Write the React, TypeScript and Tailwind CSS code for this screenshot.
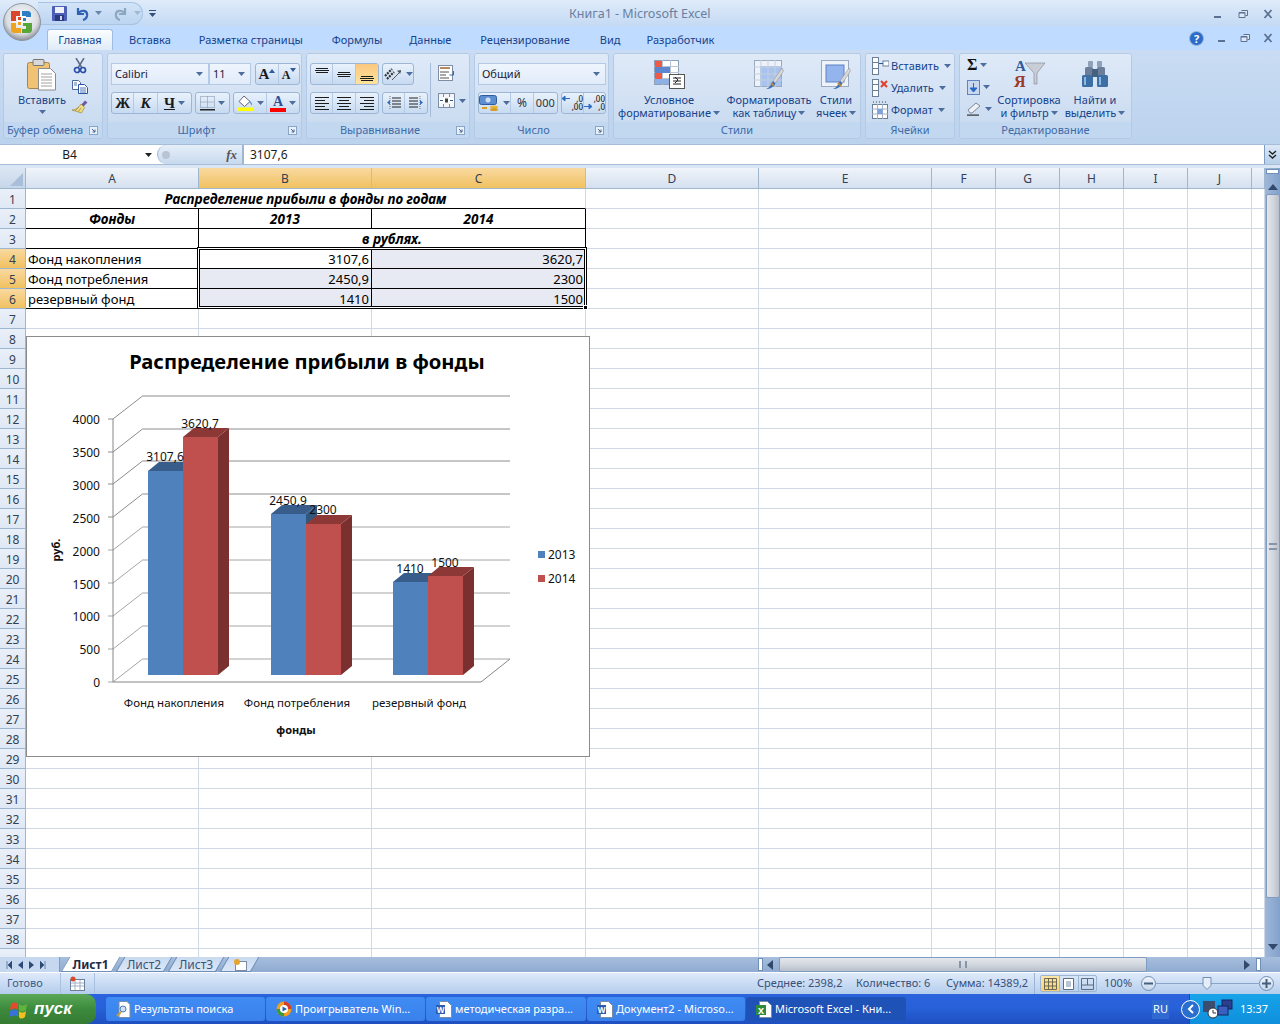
import type { ReactNode } from "react";

function Caret({ c = "#4d6d9c" }: { c?: string }) {
  return (
    <svg width="7" height="4" viewBox="0 0 7 4" className="shrink-0">
      <path d="M0 0h7L3.5 4z" fill={c} />
    </svg>
  );
}

function Lines({ kind }: { kind: "l" | "c" | "r" }) {
  const w = [14, 10, 14, 10, 14];
  return (
    <svg width="14" height="13" viewBox="0 0 14 13">
      {w.map((v, i) => {
        const x = kind === "l" ? 0 : kind === "r" ? 14 - v : (14 - v) / 2;
        return <rect key={i} x={x} y={i * 3} width={v} height="1" fill="#1c1c1c" />;
      })}
    </svg>
  );
}

function VAlign({ pos }: { pos: number }) {
  return (
    <svg width="14" height="14" viewBox="0 0 14 14">
      {[0, 2, 4].map((d, i) => (
        <rect key={i} x={i === 1 ? 0 : 1} y={pos + d} width={i === 1 ? 14 : 12} height="1" fill="#1c1c1c" />
      ))}
    </svg>
  );
}

function Launcher() {
  return (
    <svg width="9" height="9" viewBox="0 0 9 9" className="absolute right-[4px] bottom-[3px]">
      <rect x="0.5" y="0.5" width="8" height="8" fill="#e8f0fa" stroke="#8aa5c8" />
      <path d="M3 3l3 3M6 3.5V6H3.5" stroke="#44648f" fill="none" />
    </svg>
  );
}

function Group({ label, w, launcher, children }: { label: string; w: string; launcher?: boolean; children: ReactNode }) {
  return (
    <div className={`${w} relative flex h-[86px] shrink-0 flex-col overflow-hidden rounded-[3px] border border-[#b4cae4]`}>
      <div className="h-[68px] bg-gradient-to-b from-[#dfeaf8] to-[#cbdcf1]">{children}</div>
      <div className={`flex h-[16px] items-center justify-center bg-[#c1d8f0] text-[11px] text-[#3e6aa8] ${launcher ? "pr-[16px]" : ""}`}>{label}</div>
      {launcher && <Launcher />}
    </div>
  );
}

function ToolBox({ w, children }: { w: string; children: ReactNode }) {
  return (
    <div className={`${w} flex h-[22px] items-stretch overflow-hidden rounded-[3px] border border-[#9db6d4] bg-gradient-to-b from-[#e9f2fc] to-[#c7daf1]`}>
      {children}
    </div>
  );
}

function Seg({ w, on, children }: { w: string; on?: boolean; children: ReactNode }) {
  return (
    <div
      className={`${w} flex items-center justify-center gap-[3px] border-r border-[#b4c9e3] last:border-r-0 ${
        on ? "bg-gradient-to-b from-[#fbc77f] to-[#ffe39b]" : ""
      }`}
    >
      {children}
    </div>
  );
}

function Combo({ w, text }: { w: string; text: string }) {
  return (
    <div className={`${w} flex h-[22px] items-center justify-between border border-[#b4cae4] bg-gradient-to-b from-[#eef5fd] to-[#e1ecfa] pr-[5px] pl-[3px] text-[11px] text-[#1b1b3a]`}>
      <span>{text}</span>
      <Caret />
    </div>
  );
}

function Clipboard() {
  return (
    <svg width="30" height="32" viewBox="0 0 30 32">
      <rect x="0.5" y="3.5" width="22" height="26" rx="2" fill="#f0c274" stroke="#a6824c" />
      <rect x="6" y="0.5" width="11" height="6" rx="1" fill="#d8d8d8" stroke="#777" />
      <path d="M11.5 9.5h12l5 5v16.5h-17z" fill="#fff" stroke="#8b8b8b" />
      <path d="M14 15h11M14 18h11M14 21h11M14 24h11M14 27h11" stroke="#a0a0a0" />
    </svg>
  );
}

function Scissors() {
  return (
    <svg width="14" height="16" viewBox="0 0 14 16">
      <path d="M3 0l6 10M11 0L5 10" stroke="#5a6a85" strokeWidth="1.5" fill="none" />
      <circle cx="4" cy="12" r="2.5" fill="none" stroke="#2a4fa8" strokeWidth="1.7" />
      <circle cx="10" cy="12" r="2.5" fill="none" stroke="#2a4fa8" strokeWidth="1.7" />
    </svg>
  );
}

function CopyIcon() {
  return (
    <svg width="16" height="14" viewBox="0 0 16 14">
      <path d="M0.5 0.5h6l2 2v7h-8z" fill="#fff" stroke="#4a6a9a" />
      <path d="M6.5 4.5h6l3 3v6h-9z" fill="#fff" stroke="#2d55a0" />
      <path d="M8 8h6M8 10h6M8 12h6M2 3h3M2 5h3" stroke="#4a79c0" />
    </svg>
  );
}

function Brush() {
  return (
    <svg width="17" height="15" viewBox="0 0 17 15">
      <path d="M10 5l4-4.5 2.5 2L12 7z" fill="#6d58a8" />
      <path d="M10 4l3.5 3.5-3 5.5L1 10c4 0 7-3 9-6z" fill="#efdc8a" stroke="#a08a3a" strokeWidth="0.7" />
      <path d="M4 11l4-4M7 12l3-4" stroke="#b09a45" />
    </svg>
  );
}

function Letter({ ch, bold, italic, under }: { ch: string; bold?: boolean; italic?: boolean; under?: boolean }) {
  return (
    <span
      className={`font-['Liberation_Serif',serif] text-[15px] leading-none text-[#1a1a1a] ${bold ? "font-bold" : ""} ${italic ? "italic" : ""} ${under ? "underline" : ""}`}
    >
      {ch}
    </span>
  );
}

function BigA({ size, up }: { size: string; up: boolean }) {
  return (
    <span className="relative flex items-end">
      <span className={`${size} font-['Liberation_Serif',serif] leading-none font-bold text-[#1a1a1a]`}>A</span>
      <svg width="6" height="4" viewBox="0 0 6 4" className="mb-[9px]">
        <path d={up ? "M0 4h6L3 0z" : "M0 0h6L3 4z"} fill="#2f5a9e" />
      </svg>
    </span>
  );
}

function BorderIcon() {
  return (
    <svg width="15" height="15" viewBox="0 0 15 15">
      <path d="M0.5 0.5h14v11h-14zM7.5 0.5v11M0.5 6h14" fill="none" stroke="#7d8da5" strokeDasharray="1 1" />
      <rect x="0" y="13" width="15" height="1.5" fill="#222" />
    </svg>
  );
}

function FillIcon() {
  return (
    <svg width="17" height="16" viewBox="0 0 17 16">
      <path d="M7 1l6 5.5-5.5 5L2 6.5z" fill="#fff" stroke="#667" />
      <path d="M13 6c2 2 2 3 1.5 4.5C14 9 13 8 13 6z" fill="#2a75c9" />
      <rect x="0" y="12.5" width="17" height="3.5" fill="#ffff00" />
    </svg>
  );
}

function OrientIcon() {
  return (
    <svg width="20" height="15" viewBox="0 0 20 15">
      <path d="M2 9l7-7M4 12l7-7" stroke="#333" strokeWidth="2.2" strokeDasharray="2 1" />
      <path d="M9 13l9-9" stroke="#555" />
      <path d="M18 3l-4 .8 3.2 3.2z" fill="#555" />
    </svg>
  );
}

function WrapIcon() {
  return (
    <svg width="17" height="16" viewBox="0 0 17 16">
      <rect x="0.5" y="0.5" width="14" height="15" fill="#fff" stroke="#7d8da5" />
      <path d="M2 3h10" stroke="#a0622a" strokeWidth="1.5" />
      <path d="M2 7h9M2 10h6M2 13h9" stroke="#555" />
      <path d="M15.5 6v4h-4" stroke="#3566b0" fill="none" />
    </svg>
  );
}

function MergeIcon() {
  return (
    <svg width="18" height="15" viewBox="0 0 18 15">
      <rect x="0.5" y="0.5" width="16" height="14" fill="#f2f5fa" stroke="#7d8da5" />
      <rect x="1" y="5" width="15" height="5" fill="#fff" />
      <path d="M5.5 1v3M11.5 1v3M5.5 11v3M11.5 11v3" stroke="#7d8da5" />
      <path d="M2 7.5h3M12 7.5h3" stroke="#2f5a9e" />
      <rect x="7" y="5.5" width="3" height="4" fill="#444" />
    </svg>
  );
}

function IndentIcon({ flip }: { flip?: boolean }) {
  return (
    <svg width="14" height="16" viewBox="0 0 14 16" className={flip ? "-scale-x-100" : ""}>
      <path d="M5 3h9M5 6h9M5 9h9M5 12h9" stroke="#222" />
      <path d="M3 1v14" stroke="#777" strokeDasharray="1 1" />
      <path d="M0 7.5l3-2.5v5z" fill="#2f6cc0" />
    </svg>
  );
}

function MoneyIcon() {
  return (
    <svg width="21" height="17" viewBox="0 0 21 17">
      <rect x="0.5" y="0.5" width="17" height="9" rx="2" fill="#5f8ed0" stroke="#2f5a9e" />
      <circle cx="9" cy="5" r="2.5" fill="#cfe0f5" />
      <ellipse cx="15" cy="12" rx="4" ry="1.6" fill="#e8b530" />
      <ellipse cx="15" cy="14.5" rx="4" ry="1.6" fill="#d99d20" />
      <path d="M3 13h5" stroke="#d99d20" strokeWidth="2" />
    </svg>
  );
}

function DecIcon({ top, bottom, left }: { top: string; bottom: string; left: boolean }) {
  return (
    <div className="grid h-[17px] w-[21px] grid-cols-[8px_13px] text-[8px] leading-[8px] font-medium text-[#222]">
      <svg width="8" height="7" viewBox="0 0 8 7" className={left ? "col-start-1 row-start-1" : "col-start-1 row-start-2"}>
        <path d="M8 3.5H3M3 1L0 3.5 3 6z" fill="#2f6cc0" stroke="#2f6cc0" transform={left ? "" : "rotate(180 4 3.5)"} />
      </svg>
      <span className="col-start-2 row-start-1 text-right">{top}</span>
      <span className="col-start-2 row-start-2 text-right">{bottom}</span>
    </div>
  );
}

function CondFormat() {
  return (
    <svg width="31" height="29" viewBox="0 0 31 29">
      <rect x="0.5" y="0.5" width="24" height="24" fill="#fff" stroke="#8da0b8" />
      <path d="M8.5 0v25M16.5 0v25M0 6.5h25M0 12.5h25M0 18.5h25" stroke="#b7c4d4" />
      <rect x="1" y="1" width="7" height="6" fill="#ef5b47" />
      <rect x="1" y="7" width="15" height="6" fill="#5d86cf" />
      <rect x="1" y="13" width="7" height="6" fill="#ef5b47" />
      <rect x="1" y="19" width="15" height="5" fill="#8db0e5" />
      <rect x="15.5" y="14.5" width="15" height="14" fill="#fff" stroke="#555" />
      <path d="M19 18h8M19 21h8M19 24h8M21 17l3 3-3 3" stroke="#222" fill="none" />
    </svg>
  );
}

function BrushTable({ cell }: { cell?: boolean }) {
  return (
    <svg width="30" height="30" viewBox="0 0 30 30">
      <rect x="0.5" y="0.5" width="27" height="26" fill="#eef3fa" stroke="#9aa9bd" />
      {cell ? (
        <rect x="5" y="5" width="18" height="17" fill="#94b4ee" stroke="#5f84c4" />
      ) : (
        <>
          <rect x="6" y="6" width="21" height="20" fill="#a8c3ee" />
          <path d="M7 0v27M14 0v27M21 0v27M0 7h28M0 14h28M0 20h28" stroke="#c5d0de" />
        </>
      )}
      <path d="M28 8L19 21l2.5 2L29.5 11z" fill="#d8d8d8" stroke="#8a8a8a" strokeWidth="0.5" />
      <path d="M19 21l2.5 2.5C20 27 16 29 12 29c3-1 5-4 7-8z" fill="#3e6fb8" />
      <path d="M17 23l3 3" stroke="#b98a3a" strokeWidth="2" />
    </svg>
  );
}

function CellsIcon({ kind }: { kind: "add" | "del" | "fmt" }) {
  if (kind === "fmt") {
    return (
      <svg width="17" height="18" viewBox="0 0 17 18">
        <rect x="0.5" y="3.5" width="15" height="14" fill="#fff" stroke="#6c7f98" />
        <path d="M5.5 3v15M10.5 3v15M0 8h16M0 13h16" stroke="#a0b0c5" />
        <rect x="5.5" y="8" width="5" height="5" fill="#7ca3df" />
        <path d="M1 1h15" stroke="#444" strokeDasharray="1 2" />
      </svg>
    );
  }
  return (
    <svg width="17" height="18" viewBox="0 0 17 18">
      <rect x="0.5" y="0.5" width="6" height="5" fill="#fff" stroke="#6c7f98" />
      <rect x="0.5" y="5.5" width="6" height="6" fill="#fff" stroke="#6c7f98" />
      <rect x="0.5" y="11.5" width="6" height="6" fill="#fff" stroke="#6c7f98" />
      {kind === "add" ? (
        <>
          <rect x="11" y="4" width="6" height="5" fill="#fff" stroke="#6c7f98" />
          <path d="M7 6.5h4" stroke="#2f5a9e" />
        </>
      ) : (
        <path d="M9 2l6 6M15 2l-6 6" stroke="#e0402a" strokeWidth="2" />
      )}
    </svg>
  );
}

function SortIcon() {
  return (
    <svg width="32" height="32" viewBox="0 0 32 32">
      <path d="M12 5h20l-8 10v11h-3V15z" fill="#c9ced6" stroke="#7c8592" strokeWidth="0.6" />
      <text x="2" y="13" fontSize="15" fontWeight="700" fill="#2f5a9e" className="font-['Liberation_Serif',serif]">A</text>
      <text x="1" y="29" fontSize="16" fontWeight="700" fill="#9c3a2a" className="font-['Liberation_Serif',serif]">Я</text>
    </svg>
  );
}

function FindIcon() {
  return (
    <svg width="28" height="28" viewBox="0 0 28 28">
      <rect x="7" y="1" width="5" height="6" rx="1" fill="#8fa1b8" />
      <rect x="16" y="1" width="5" height="6" rx="1" fill="#8fa1b8" />
      <rect x="4" y="7" width="8" height="9" rx="1.5" fill="#6b7f9a" />
      <rect x="16" y="7" width="8" height="9" rx="1.5" fill="#6b7f9a" />
      <rect x="1" y="15" width="11" height="12" rx="1.5" fill="#3b6fa5" />
      <rect x="16" y="15" width="11" height="12" rx="1.5" fill="#3b6fa5" />
      <rect x="11" y="9" width="6" height="8" fill="#46607f" />
      <rect x="3" y="17" width="2" height="8" fill="#8db8e0" />
      <rect x="18" y="17" width="2" height="8" fill="#8db8e0" />
    </svg>
  );
}

function OfficeButton() {
  return (
    <svg width="44" height="44" viewBox="0 0 44 44" className="absolute top-0 left-0">
      <defs>
        <radialGradient id="orb" cx="50%" cy="40%" r="60%">
          <stop offset="0" stopColor="#ffffff" />
          <stop offset="0.7" stopColor="#d9dde2" />
          <stop offset="1" stopColor="#8a8f96" />
        </radialGradient>
      </defs>
      <circle cx="22" cy="22" r="18.5" fill="url(#orb)" stroke="#8e959e" />
      <path d="M11 11h9v5h-4v5h-5z" fill="#d9482b" />
      <path d="M22 11h7l2 2v4h-5v-1h-4z" fill="#2f7ec4" />
      <path d="M11 23h5v5h5v5h-8l-2-2z" fill="#eda320" />
      <path d="M26 23h6v8l-2 2h-8v-4h4z" fill="#5aa53a" />
      <rect x="18" y="17" width="3" height="3" fill="#d9482b" />
      <rect x="23" y="18" width="3" height="3" fill="#2f7ec4" />
      <rect x="18" y="22" width="3" height="3" fill="#eda320" />
      <rect x="23" y="23" width="3" height="3" fill="#5aa53a" />
    </svg>
  );
}

function WinGlyph({ kind }: { kind: "min" | "max" | "close" }) {
  return (
    <svg width="10" height="10" viewBox="0 0 10 10">
      {kind === "min" && <rect x="1" y="7" width="7" height="2" fill="#5a7192" />}
      {kind === "max" && <path d="M3.5 1.5h6v5h-2M1 3.5h6v5H1zM1 4h6" fill="#dce8f6" stroke="#5a7192" />}
      {kind === "close" && <path d="M1.5 1l7 8M8.5 1l-7 8" stroke="#5a7192" strokeWidth="1.8" />}
    </svg>
  );
}

function TitleBar() {
  return (
    <div className="flex h-[26px] items-center bg-gradient-to-b from-[#dfebfa] to-[#c4daf4]">
      <div className="ml-[38px] flex h-[23px] w-[105px] items-center rounded-r-full border border-l-0 border-[#a8c4e5] bg-gradient-to-b from-[#d3e4f8] to-[#bcd5f2] pl-[14px]">
        <svg width="15" height="15" viewBox="0 0 15 15" className="shrink-0">
          <rect width="15" height="15" rx="1" fill="#4b5fb5" />
          <rect x="3" y="1" width="9" height="6" fill="#eef1fb" />
          <rect x="3" y="9" width="9" height="6" fill="#2b3a80" />
          <rect x="8" y="10" width="2" height="4" fill="#cfd6ee" />
        </svg>
        <svg width="15" height="15" viewBox="0 0 15 15" className="ml-[8px] shrink-0">
          <path d="M3 2v6h6" fill="none" stroke="#2d62b5" strokeWidth="2.2" />
          <path d="M3 8c3-5 10-4 9 2-.4 2-2 3.5-4 4" fill="none" stroke="#2d62b5" strokeWidth="2.2" />
        </svg>
        <span className="mr-[11px] ml-[5px]"><Caret c="#6b86ad" /></span>
        <svg width="15" height="15" viewBox="0 0 15 15" className="shrink-0">
          <path d="M12 2v6H6" fill="none" stroke="#8ea7c1" strokeWidth="2.2" />
          <path d="M12 8C9 3 2 4 3 10c.4 2 2 3.5 4 4" fill="none" stroke="#8ea7c1" strokeWidth="2.2" />
        </svg>
        <span className="ml-[6px]"><Caret c="#a3b7cf" /></span>
      </div>
      <svg width="7" height="7" viewBox="0 0 7 7" className="ml-[6px]">
        <rect width="7" height="1" fill="#33507d" />
        <path d="M0 3h7L3.5 7z" fill="#33507d" />
      </svg>
      <div className="ml-[413px] w-[150px] pt-[3px] text-[12.5px] whitespace-nowrap text-[#6a7f9e]">Книга1 - Microsoft Excel</div>
      <div className="ml-auto flex items-center gap-[15px] pt-[1px] pr-[7px] text-[#5a7192]">
        <WinGlyph kind="min" />
        <WinGlyph kind="max" />
        <WinGlyph kind="close" />
      </div>
    </div>
  );
}

function TabsRow() {
  const tabs = [
    { t: "Вставка", cls: "ml-[16px]" },
    { t: "Разметка страницы", cls: "ml-[28px]" },
    { t: "Формулы", cls: "ml-[29px]" },
    { t: "Данные", cls: "ml-[27px]" },
    { t: "Рецензирование", cls: "ml-[29px]" },
    { t: "Вид", cls: "ml-[30px]" },
    { t: "Разработчик", cls: "ml-[26px]" },
  ];
  return (
    <div className="flex h-[24px] items-center bg-[#bfdbff] pt-[4px] pl-[47px] text-[11px] text-[#15428b]">
      <div className="-mt-[1px] flex h-[24px] w-[66px] items-center justify-center self-start rounded-t-[3px] border border-b-0 border-[#9ebedf] bg-gradient-to-b from-[#fbfdff] to-[#dbe9f8] pb-[2px]">
        Главная
      </div>
      {tabs.map((t) => (
        <span key={t.t} className={t.cls}>
          {t.t}
        </span>
      ))}
      <div className="mb-[4px] ml-auto flex items-center gap-[13px] pr-[7px]">
        <svg width="15" height="15" viewBox="0 0 15 15">
          <circle cx="7.5" cy="7.5" r="7" fill="#2c6cc8" stroke="#9ab8de" />
          <text x="7.5" y="11.5" textAnchor="middle" fontSize="11" fontWeight="700" fill="#fff">?</text>
        </svg>
        <WinGlyph kind="min" />
        <WinGlyph kind="max" />
        <WinGlyph kind="close" />
      </div>
    </div>
  );
}

function Ribbon() {
  return (
    <div className="flex h-[91px] gap-1 bg-gradient-to-b from-[#c9dcf3] to-[#bcd3ee] pt-[3px] pl-[3px] text-[#15428b]">
      <Group label="Буфер обмена" w="w-[100px]" launcher>
        <div className="flex">
          <div className="flex w-[67px] flex-col items-center pt-[5px] pl-[9px] text-[11px]">
            <Clipboard />
            <span className="mt-[2px] leading-[14px]">Вставить</span>
            <span className="mt-[3px]"><Caret /></span>
          </div>
          <div className="flex flex-col items-center gap-[6px] pt-[4px]">
            <Scissors />
            <CopyIcon />
            <Brush />
          </div>
        </div>
      </Group>
      <Group label="Шрифт" w="w-[195px]" launcher>
        <div className="flex flex-col gap-[7px] pt-[9px] pl-[3px]">
          <div className="flex items-center">
            <Combo w="w-[98px]" text="Calibri" />
            <Combo w="w-[42px]" text="11" />
            <div className="ml-[4px]">
              <ToolBox w="w-[45px]">
                <Seg w="w-[24px]"><BigA size="text-[15px]" up /></Seg>
                <Seg w="w-[21px]"><BigA size="text-[12px]" up={false} /></Seg>
              </ToolBox>
            </div>
          </div>
          <div className="flex items-center gap-[3px]">
            <ToolBox w="w-[81px]">
              <Seg w="w-[23px]"><Letter ch="Ж" bold /></Seg>
              <Seg w="w-[24px]"><Letter ch="К" bold italic /></Seg>
              <Seg w="w-[34px]"><Letter ch="Ч" bold under /><Caret /></Seg>
            </ToolBox>
            <ToolBox w="w-[35px]">
              <Seg w="w-[35px]"><BorderIcon /><Caret /></Seg>
            </ToolBox>
            <ToolBox w="w-[67px]">
              <Seg w="w-[34px]"><FillIcon /><Caret /></Seg>
              <Seg w="w-[33px]">
                <span className="flex flex-col items-center">
                  <span className="font-['Liberation_Serif',serif] text-[14px] leading-[13px] font-bold text-[#2f4f96]">A</span>
                  <span className="h-[4px] w-[16px] bg-[#ff0000]" />
                </span>
                <Caret />
              </Seg>
            </ToolBox>
          </div>
        </div>
      </Group>
      <Group label="Выравнивание" w="w-[164px]" launcher>
        <div className="flex pt-[9px] pl-[3px]">
          <div className="flex w-[121px] flex-col gap-[7px]">
            <div className="flex gap-[3px]">
              <ToolBox w="w-[69px]">
                <Seg w="w-[23px]"><VAlign pos={1} /></Seg>
                <Seg w="w-[23px]"><VAlign pos={5} /></Seg>
                <Seg w="w-[23px]" on><VAlign pos={9} /></Seg>
              </ToolBox>
              <ToolBox w="w-[32px]">
                <Seg w="w-[32px]"><OrientIcon /><Caret /></Seg>
              </ToolBox>
            </div>
            <div className="flex gap-[3px]">
              <ToolBox w="w-[69px]">
                <Seg w="w-[23px]"><Lines kind="l" /></Seg>
                <Seg w="w-[23px]"><Lines kind="c" /></Seg>
                <Seg w="w-[23px]"><Lines kind="r" /></Seg>
              </ToolBox>
              <ToolBox w="w-[46px]">
                <Seg w="w-[23px]"><IndentIcon /></Seg>
                <Seg w="w-[23px]"><IndentIcon flip /></Seg>
              </ToolBox>
            </div>
          </div>
          <div className="ml-[-1px] h-[54px] w-px bg-[#a5bcd8]" />
          <div className="flex flex-col gap-[12px] pt-[2px] pl-[7px]">
            <WrapIcon />
            <div className="flex items-center gap-[3px]"><MergeIcon /><Caret /></div>
          </div>
        </div>
      </Group>
      <Group label="Число" w="w-[135px]" launcher>
        <div className="flex flex-col gap-[7px] pt-[9px] pl-[3px]">
          <Combo w="w-[128px]" text="Общий" />
          <div className="flex gap-[3px]">
            <ToolBox w="w-[80px]">
              <Seg w="w-[33px]"><MoneyIcon /><Caret /></Seg>
              <Seg w="w-[23px]"><span className="text-[12px] text-[#333]">%</span></Seg>
              <Seg w="w-[24px]"><span className="text-[11px] text-[#333]">000</span></Seg>
            </ToolBox>
            <ToolBox w="w-[45px]">
              <Seg w="w-[23px]"><DecIcon top=",0" bottom=",00" left /></Seg>
              <Seg w="w-[22px]"><DecIcon top=",00" bottom=",0" left={false} /></Seg>
            </ToolBox>
          </div>
        </div>
      </Group>
      <Group label="Стили" w="w-[248px]">
        <div className="flex pt-[6px] text-[11px] leading-[13px]">
          <div className="flex w-[110px] flex-col items-center">
            <div className="mb-[4px]"><CondFormat /></div>
            <span>Условное</span>
            <span className="flex items-center gap-[2px]">форматирование<Caret /></span>
          </div>
          <div className="flex w-[90px] flex-col items-center">
            <div className="mb-[3px]"><BrushTable /></div>
            <span>Форматировать</span>
            <span className="flex items-center gap-[2px]">как таблицу<Caret /></span>
          </div>
          <div className="flex w-[44px] flex-col items-center">
            <div className="mb-[3px]"><BrushTable cell /></div>
            <span>Стили</span>
            <span className="flex items-center gap-[2px]">ячеек<Caret /></span>
          </div>
        </div>
      </Group>
      <Group label="Ячейки" w="w-[90px]">
        <div className="flex flex-col gap-[4px] pt-[3px] pl-[6px] text-[11px]">
          <div className="flex h-[18px] items-center gap-[2px]"><CellsIcon kind="add" />Вставить<span className="ml-[3px]"><Caret /></span></div>
          <div className="flex h-[18px] items-center gap-[2px]"><CellsIcon kind="del" />Удалить<span className="ml-[3px]"><Caret /></span></div>
          <div className="flex h-[18px] items-center gap-[2px]"><CellsIcon kind="fmt" />Формат<span className="ml-[3px]"><Caret /></span></div>
        </div>
      </Group>
      <Group label="Редактирование" w="w-[173px]">
        <div className="flex text-[11px] leading-[13px]">
          <div className="flex w-[34px] flex-col items-start gap-[7px] pt-[3px] pl-[7px]">
            <div className="flex h-[15px] items-center gap-[3px]">
              <span className="font-['Liberation_Serif',serif] text-[16px] font-bold text-[#111]">Σ</span>
              <Caret />
            </div>
            <div className="flex h-[16px] items-center gap-[3px]">
              <svg width="13" height="15" viewBox="0 0 13 15">
                <rect x="0.5" y="0.5" width="12" height="14" fill="#c9d8ef" stroke="#5f84c4" />
                <path d="M6.5 3v6M3 8h7l-3.5 4z" fill="#2668c8" stroke="#2668c8" />
              </svg>
              <Caret />
            </div>
            <div className="flex h-[14px] items-center gap-[3px]">
              <svg width="15" height="14" viewBox="0 0 15 14">
                <path d="M1 8l8-7 4 3-8 7H3z" fill="#eef1f6" stroke="#7a8797" />
                <rect x="0" y="12.5" width="12" height="1.2" fill="#333" />
              </svg>
              <Caret />
            </div>
          </div>
          <div className="flex w-[70px] flex-col items-center pt-[4px]">
            <div className="mb-[3px]"><SortIcon /></div>
            <span>Сортировка</span>
            <span className="flex items-center gap-[2px]">и фильтр<Caret /></span>
          </div>
          <div className="flex w-[62px] flex-col items-center pt-[6px]">
            <div className="mb-[5px]"><FindIcon /></div>
            <span>Найти и</span>
            <span className="flex items-center gap-[2px]">выделить<Caret /></span>
          </div>
        </div>
      </Group>
    </div>
  );
}

function FormulaBar() {
  return (
    <div className="flex h-[27px] flex-col bg-[#bcd3ee] pt-[3px]">
      <div className="flex h-[21px] items-stretch border-y border-[#a5bdd9] bg-white text-[12px] text-[#1b1b1b]">
        <div className="relative flex w-[157px] items-center justify-center pr-[18px]">
          B4
          <span className="absolute right-[5px]"><Caret c="#222" /></span>
        </div>
        <div className="flex w-[86px] items-center justify-between rounded-l-full border border-y-0 border-[#9fb6d2] bg-gradient-to-b from-[#e6eff9] to-[#c8d9ee] pr-[5px] pl-[4px]">
          <span className="h-[8px] w-[8px] rounded-full bg-[#b9c4d3]" />
          <span className="font-['Liberation_Serif',serif] text-[13px] font-bold italic text-[#555]">fx</span>
        </div>
        <div className="flex flex-1 items-center border-l border-[#9fb6d2] pl-[6px]">3107,6</div>
        <div className="flex w-[16px] items-center justify-center border-l border-[#7f9dc0] bg-gradient-to-b from-[#dce8f6] to-[#b8cfe9]">
          <svg width="9" height="9" viewBox="0 0 9 9">
            <path d="M1 1l3.5 3L8 1M1 5l3.5 3L8 5" fill="none" stroke="#222" strokeWidth="1.4" />
          </svg>
        </div>
      </div>
      <div className="h-[3px] bg-[#dbe6f4]" />
    </div>
  );
}

const cols = [
  { n: "A", w: "w-[173px]" },
  { n: "B", w: "w-[173px]", sel: true },
  { n: "C", w: "w-[214px]", sel: true },
  { n: "D", w: "w-[173px]" },
  { n: "E", w: "w-[173px]" },
  { n: "F", w: "w-[64px]" },
  { n: "G", w: "w-[64px]" },
  { n: "H", w: "w-[64px]" },
  { n: "I", w: "w-[64px]" },
  { n: "J", w: "w-[64px]" },
  { n: "", w: "w-[13px]" },
];

const GRID = "border-r border-b border-[#d0d7e5]";
const BLACK = "border-r border-b border-black";
const HEAD = "font-bold italic text-center text-[13.5px]";

function RowHead({ n, sel }: { n?: number; sel?: boolean }) {
  return (
    <div
      className={`flex w-[26px] shrink-0 items-center justify-center border-r border-b border-[#9eb6ce] pt-[1px] text-[12px] text-[#333f52] ${
        sel ? "bg-gradient-to-b from-[#f9d99f] to-[#f1c15f]" : "bg-gradient-to-b from-[#eaf0f9] to-[#dfe8f5]"
      }`}
    >
      {n}
    </div>
  );
}

function BlankCells({ from }: { from: number }) {
  return (
    <>
      {cols.slice(from).map((c) => (
        <div key={c.n} className={`${c.w} shrink-0 ${GRID}`} />
      ))}
    </>
  );
}

function TableRows() {
  const data = [
    { n: 4, a: "Фонд накопления", b: "3107,6", c: "3620,7", first: true },
    { n: 5, a: "Фонд потребления", b: "2450,9", c: "2300" },
    { n: 6, a: "резервный фонд", b: "1410", c: "1500" },
  ];
  return (
    <>
      <div className="flex h-[20px]">
        <RowHead n={1} />
        <div className={`w-[560px] shrink-0 ${HEAD} ${BLACK} border-r-[#d0d7e5]`}>Распределение прибыли в фонды по годам</div>
        <BlankCells from={3} />
      </div>
      <div className="flex h-[20px]">
        <RowHead n={2} />
        <div className={`w-[173px] shrink-0 ${HEAD} ${BLACK}`}>Фонды</div>
        <div className={`w-[173px] shrink-0 ${HEAD} ${BLACK}`}>2013</div>
        <div className={`w-[214px] shrink-0 ${HEAD} ${BLACK}`}>2014</div>
        <BlankCells from={3} />
      </div>
      <div className="flex h-[20px]">
        <RowHead n={3} />
        <div className={`w-[173px] shrink-0 ${BLACK}`} />
        <div className={`w-[387px] shrink-0 ${HEAD} ${BLACK}`}>в рублях.</div>
        <BlankCells from={3} />
      </div>
      {data.map((r) => (
        <div key={r.n} className="flex h-[20px]">
          <RowHead n={r.n} sel />
          <div className={`w-[173px] shrink-0 pl-[2px] ${BLACK}`}>{r.a}</div>
          <div className={`w-[173px] shrink-0 pr-[2px] text-right ${BLACK} ${r.first ? "" : "bg-[#e7e9f3]"}`}>{r.b}</div>
          <div className={`w-[214px] shrink-0 pr-[2px] text-right ${BLACK} bg-[#e7e9f3]`}>{r.c}</div>
          <BlankCells from={3} />
        </div>
      ))}
    </>
  );
}

function Chart() {
  const back = [396, 429, 461, 494, 527, 560, 593, 626, 659];
  const ticks = ["4000", "3500", "3000", "2500", "2000", "1500", "1000", "500", "0"];
  const bars = [
    { x: 148, top: 471, f: "#4f81bd", t: "#385d8a", s: "#2f5780" },
    { x: 183, top: 437, f: "#c0504d", t: "#8c3836", s: "#7a302e" },
    { x: 271, top: 514, f: "#4f81bd", t: "#385d8a", s: "#2f5780" },
    { x: 306, top: 524, f: "#c0504d", t: "#8c3836", s: "#7a302e" },
    { x: 393, top: 582, f: "#4f81bd", t: "#385d8a", s: "#2f5780" },
    { x: 428, top: 576, f: "#c0504d", t: "#8c3836", s: "#7a302e" },
  ];
  const vals = [
    { x: 165, y: 461, v: "3107,6" },
    { x: 200, y: 428, v: "3620,7" },
    { x: 288, y: 505, v: "2450,9" },
    { x: 323, y: 514, v: "2300" },
    { x: 410, y: 573, v: "1410" },
    { x: 445, y: 567, v: "1500" },
  ];
  return (
    <div className="absolute top-[168px] left-[26px] h-[421px] w-[564px] border border-[#8c8c8c] bg-white">
      <svg width="562" height="419" viewBox="27 337 562 419" className="block font-['Noto_Sans',sans-serif]">
        <text x="307" y="369" textAnchor="middle" fontSize="20.2" fontWeight="700" fill="#000">Распределение прибыли в фонды</text>
        {back.map((y, i) => (
          <g key={y} stroke={i < 4 ? "#8c8c8c" : "#a6a6a6"} fill="none">
            <path d={`M510 ${y}H142.5L113 ${y + 23}`} />
            <path d={`M108 ${y + 23}H113`} />
          </g>
        ))}
        <path d="M113 419V682H481L510 659" fill="none" stroke="#868686" />
        {ticks.map((t, i) => (
          <text key={t} x="100" y={424 + i * 32.9} textAnchor="end" fontSize="12" fill="#111">{t}</text>
        ))}
        {bars.map((b) => (
          <g key={b.x}>
            <path d={`M${b.x + 35} ${b.top}l11 -9V666l-11 9z`} fill={b.s} />
            <path d={`M${b.x} ${b.top}l11 -9h35l-11 9z`} fill={b.t} />
            <rect x={b.x} y={b.top} width="35" height={675 - b.top} fill={b.f} />
          </g>
        ))}
        {vals.map((v) => (
          <text key={v.v} x={v.x} y={v.y} textAnchor="middle" fontSize="12" fill="#111">{v.v}</text>
        ))}
        <text x="174" y="707" textAnchor="middle" fontSize="11.5" fill="#111">Фонд накопления</text>
        <text x="297" y="707" textAnchor="middle" fontSize="11.5" fill="#111">Фонд потребления</text>
        <text x="419" y="707" textAnchor="middle" fontSize="11.5" fill="#111">резервный фонд</text>
        <text x="296" y="734" textAnchor="middle" fontSize="11" fontWeight="700" fill="#111">фонды</text>
        <text x="60" y="550" textAnchor="middle" fontSize="11" fontWeight="700" fill="#111" transform="rotate(-90 60 550)">руб.</text>
        <rect x="538" y="551" width="7" height="7" fill="#4f81bd" />
        <text x="548" y="559" fontSize="12" fill="#111">2013</text>
        <rect x="538" y="575" width="7" height="7" fill="#c0504d" />
        <text x="548" y="583" fontSize="12" fill="#111">2014</text>
      </svg>
    </div>
  );
}

function VScroll() {
  return (
    <div className="flex w-[15px] shrink-0 flex-col items-center bg-gradient-to-r from-[#9db7d9] to-[#83a1c9]">
      <div className="mt-[1px] h-[5px] w-[13px] border border-[#6f8fb8] bg-white" />
      <div className="mt-[10px] h-0 w-0 border-x-[5px] border-b-[6px] border-x-transparent border-b-[#33496b]" />
      <div className="mt-[4px] flex h-[704px] w-[14px] items-center justify-center rounded-[2px] border border-[#7f9dc0] bg-gradient-to-r from-[#e4e7ec] via-[#d2d7de] to-[#b9c0cb]">
        <span className="h-[7px] w-[8px] border-y-2 border-[#8795a8]" />
      </div>
      <div className="mt-[46px] h-0 w-0 border-x-[5px] border-t-[6px] border-x-transparent border-t-[#33496b]" />
    </div>
  );
}

function Sheet() {
  const blanks = Array.from({ length: 32 }, (_, i) => i + 7);
  return (
    <div className="flex h-[789px] overflow-hidden bg-white">
      <div className="relative w-[1265px] shrink-0 overflow-hidden text-[13px] leading-[21px] text-black">
        <div className="flex h-[21px] border-b border-[#9eb6ce]">
          <div className="flex w-[26px] shrink-0 items-end justify-end border-r border-[#9eb6ce] bg-gradient-to-b from-[#dce6f3] to-[#c6d6ea]">
            <svg width="13" height="13" viewBox="0 0 13 13" className="mr-[2px] mb-[2px]">
              <path d="M13 0v13H0z" fill="#a9bed8" />
            </svg>
          </div>
          {cols.map((c) => (
            <div
              key={c.n}
              className={`${c.w} flex shrink-0 items-center justify-center border-r pt-[2px] text-[12px] leading-[14px] text-[#333f52] ${
                c.sel
                  ? "border-[#f1b64f] bg-gradient-to-b from-[#f9d99f] to-[#f1c15f]"
                  : "border-[#9eb6ce] bg-gradient-to-b from-[#f0f4fa] to-[#d5e0f0]"
              }`}
            >
              {c.n}
            </div>
          ))}
        </div>
        <TableRows />
        {blanks.map((n) => (
          <div key={n} className="flex h-[20px]">
            <RowHead n={n} />
            <BlankCells from={0} />
          </div>
        ))}
        <div className="flex h-[20px]">
          <RowHead />
          <BlankCells from={0} />
        </div>
        {/* selection frame */}
        <div className="absolute top-[79px] left-[197px] h-[62px] w-[390px] border border-black shadow-[inset_0_0_0_1px_#fff,inset_0_0_0_2px_#000]" />
        <div className="absolute top-[137px] left-[583px] h-[5px] w-[5px] border border-white bg-black" />
        <Chart />
      </div>
      <VScroll />
    </div>
  );
}

function SheetTab({ label, active, w }: { label: ReactNode; active?: boolean; w: string }) {
  return (
    <div className={`${w} relative flex h-[15px] items-center justify-center text-[12px] ${active ? "font-bold text-[#1b2b48]" : "text-[#3a5478]"}`}>
      <span
        className={`absolute inset-0 -skew-x-[30deg] border border-t-0 border-[#6f8fb8] ${
          active ? "bg-white" : "bg-gradient-to-b from-[#c9daf0] to-[#dbe7f6]"
        }`}
      />
      <span className="relative">{label}</span>
    </div>
  );
}

function SheetTabs() {
  return (
    <div className="flex h-[16px] items-start border-b border-white bg-gradient-to-b from-[#a7bedd] to-[#8fabd0]">
      <div className="flex h-[15px] w-[60px] shrink-0 items-center gap-[6px] border-r border-[#7f9dc0] bg-[#c5d8ef] pl-[6px] text-[#2c4a75]">
        <svg width="6" height="8" viewBox="0 0 6 8"><path d="M1 0v8M6 0v8L2 4z" fill="#2c4a75" stroke="#2c4a75" strokeWidth="0.6" /></svg>
        <svg width="5" height="8" viewBox="0 0 5 8"><path d="M5 0v8L0 4z" fill="#2c4a75" /></svg>
        <svg width="5" height="8" viewBox="0 0 5 8"><path d="M0 0v8l5-4z" fill="#2c4a75" /></svg>
        <svg width="6" height="8" viewBox="0 0 6 8"><path d="M5 0v8M0 0v8l4-4z" fill="#2c4a75" stroke="#2c4a75" strokeWidth="0.6" /></svg>
      </div>
      <div className="ml-[5px] flex">
        <SheetTab label="Лист1" active w="w-[51px]" />
        <div className="w-[4px]" />
        <SheetTab label="Лист2" w="w-[48px]" />
        <div className="w-[4px]" />
        <SheetTab label="Лист3" w="w-[48px]" />
        <div className="w-[4px]" />
        <SheetTab
          w="w-[31px]"
          label={
            <svg width="14" height="13" viewBox="0 0 14 13">
              <rect x="2.5" y="3.5" width="11" height="9" fill="#fff" stroke="#7a8ba3" />
              <circle cx="4" cy="4" r="3" fill="#e5a52d" />
            </svg>
          }
        />
      </div>
      <div className="ml-auto flex h-[15px] w-[522px] items-center">
        <span className="h-[13px] w-[5px] border border-[#6f8fb8] bg-white" />
        <span className="ml-[4px] h-0 w-0 border-y-[5px] border-r-[6px] border-y-transparent border-r-[#33496b]" />
        <div className="ml-[6px] flex h-[15px] w-[368px] items-center justify-center rounded-[2px] border border-[#7f9dc0] bg-gradient-to-b from-[#e4e7ec] via-[#d2d7de] to-[#b9c0cb]">
          <span className="h-[7px] w-[8px] border-x-2 border-[#8795a8]" />
        </div>
        <span className="ml-[97px] h-0 w-0 border-y-[5px] border-l-[6px] border-y-transparent border-l-[#33496b]" />
        <span className="ml-[6px] h-[13px] w-[5px] border border-[#6f8fb8] bg-white" />
      </div>
    </div>
  );
}

function Zoom100({ sign, cls }: { sign: string; cls: string }) {
  return (
    <div className={`${cls} flex h-[15px] w-[15px] items-center justify-center rounded-full border border-[#6f8fb8] bg-gradient-to-b from-[#f0f5fb] to-[#c7d6ea]`}>
      <svg width="9" height="9" viewBox="0 0 9 9">
        <path d={sign === "+" ? "M0 4.5h9M4.5 0v9" : "M0 4.5h9"} stroke="#44607f" strokeWidth="2" />
      </svg>
    </div>
  );
}

function StatusBar() {
  return (
    <div className="flex h-[21px] items-center bg-gradient-to-b from-[#dfeafa] to-[#b4cdec] text-[11px] whitespace-nowrap text-[#3b5d8a]">
      <span className="w-[60px] pl-[7px]">Готово</span>
      <div className="flex h-full w-[35px] items-center justify-center border-x border-[#a9c1de]">
        <svg width="15" height="15" viewBox="0 0 15 15">
          <rect x="0.5" y="3.5" width="14" height="11" fill="#fff" stroke="#6c7f98" />
          <path d="M1 7h13M1 10h13M5 4v10M10 4v10" stroke="#a0b0c5" />
          <circle cx="3" cy="3" r="2.5" fill="#d9482b" />
        </svg>
      </div>
      <span className="ml-[662px] w-[83px] text-[#38507a]">Среднее: 2398,2</span>
      <span className="ml-[16px] w-[73px] text-[#38507a]">Количество: 6</span>
      <span className="ml-[17px] w-[79px] text-[#38507a]">Сумма: 14389,2</span>
      <div className="ml-[9px] h-full w-px bg-[#9bb4d4]" />
      <div className="ml-[5px] flex h-[17px] w-[57px] overflow-hidden rounded-[2px] border border-[#9db6d4]">
        <div className="flex w-[19px] items-center justify-center bg-gradient-to-b from-[#fde6a8] to-[#fbcf73]">
          <svg width="13" height="12" viewBox="0 0 13 12"><path d="M.5.5h12v11H.5zM4.5 0v12M8.5 0v12M0 4h13M0 8h13" fill="none" stroke="#6a6a52" /></svg>
        </div>
        <div className="flex w-[19px] items-center justify-center border-l border-[#9db6d4]">
          <svg width="11" height="12" viewBox="0 0 11 12"><path d="M.5.5h10v11H.5z" fill="#fff" stroke="#5e6c80" /><path d="M3 3h5v6H3z" fill="#b9c4d3" /></svg>
        </div>
        <div className="flex w-[19px] items-center justify-center border-l border-[#9db6d4]">
          <svg width="13" height="12" viewBox="0 0 13 12"><path d="M.5.5h12v11H.5zM6.5 0v7M0 7h13" fill="none" stroke="#5e6c80" /></svg>
        </div>
      </div>
      <span className="ml-[7px] w-[29px] text-[#38507a]">100%</span>
      <Zoom100 sign="-" cls="ml-[8px]" />
      <div className="relative mx-[-1px] flex h-full w-[105px] items-center">
        <div className="h-px w-full bg-[#8aa5c9]" />
        <svg width="10" height="13" viewBox="0 0 10 13" className="absolute top-[4px] left-[47px]">
          <path d="M1 .5h8v8l-4 4-4-4z" fill="#e6edf6" stroke="#6f8fb8" />
        </svg>
      </div>
      <Zoom100 sign="+" cls="" />
    </div>
  );
}

function TaskBtn({ label, w, active, icon }: { label: string; w: string; active?: boolean; icon: ReactNode }) {
  return (
    <div
      className={`${w} flex h-[24px] shrink-0 items-center gap-[3px] rounded-[3px] pl-[10px] text-[11px] text-white ${
        active ? "bg-[#1e52b7]" : "bg-gradient-to-b from-[#3f8cf3] to-[#3a80ec]"
      }`}
    >
      {icon}
      <span className="whitespace-nowrap">{label}</span>
    </div>
  );
}

function WordDoc() {
  return (
    <svg width="16" height="17" viewBox="0 0 16 17">
      <path d="M3.5.5h8l4 4v12h-12z" fill="#fff" stroke="#7a8ba3" />
      <rect x="0" y="4" width="9" height="9" fill="#2a5db0" />
      <text x="4.5" y="11.5" textAnchor="middle" fontSize="8" fontWeight="700" fill="#fff">W</text>
    </svg>
  );
}

function Taskbar() {
  return (
    <div className="flex h-[30px] items-center bg-gradient-to-b from-[#2a63dd] via-[#2760d7] to-[#1f4fc0]">
      <div className="flex h-full w-[96px] shrink-0 items-center gap-[5px] rounded-r-[10px] bg-gradient-to-b from-[#5aa857] via-[#3c8a3c] to-[#357b33] pl-[9px] font-['Liberation_Sans',sans-serif] text-[17px] font-bold italic text-white">
        <svg width="20" height="20" viewBox="0 0 20 20">
          <path d="M2 5c3-2 5-2 7 0v6C7 9 4 9 1 11z" fill="#e8492c" />
          <path d="M10 5c2 2 5 2 8 0l-1 6c-3 2-5 2-7 0z" fill="#62b33b" />
          <path d="M1 12c3-2 6-2 8 0v6c-2-2-5-2-8 0z" fill="#3b72d8" />
          <path d="M10 12c2 2 4 2 7 0l-1 6c-3 2-5 2-6 0z" fill="#f0c020" />
        </svg>
        пуск
      </div>
      <div className="ml-[10px] flex gap-[1px]">
        <TaskBtn
          w="w-[159px]"
          label="Результаты поиска"
          icon={
            <svg width="15" height="17" viewBox="0 0 15 17">
              <path d="M3 .5h8l3 3v13H3z" fill="#fff" stroke="#7a8ba3" />
              <circle cx="7" cy="8" r="3" fill="#cfe3f7" stroke="#4a7ab5" />
              <path d="M5 11l-4 4" stroke="#c79a3c" strokeWidth="2" />
            </svg>
          }
        />
        <TaskBtn
          w="w-[159px]"
          label="Проигрыватель Win..."
          icon={
            <svg width="16" height="16" viewBox="0 0 16 16">
              <circle cx="8" cy="8" r="7.5" fill="#f0a020" />
              <path d="M8 .5A7.5 7.5 0 0 1 15.5 8H8z" fill="#d43c2c" />
              <path d="M8 15.5A7.5 7.5 0 0 1 .5 8H8z" fill="#3a9a3a" />
              <circle cx="8" cy="8" r="4" fill="#fff" />
              <path d="M6.5 5.5v5L11 8z" fill="#2a5db0" />
            </svg>
          }
        />
        <TaskBtn w="w-[160px]" label="методическая разра..." icon={<WordDoc />} />
        <TaskBtn w="w-[158px]" label="Документ2 - Microso..." icon={<WordDoc />} />
        <TaskBtn
          w="w-[160px]"
          active
          label="Microsoft Excel - Кни..."
          icon={
            <svg width="16" height="17" viewBox="0 0 16 17">
              <path d="M3.5.5h8l4 4v12h-12z" fill="#fff" stroke="#7a8ba3" />
              <rect x="0" y="4" width="10" height="10" fill="#2f8a3c" />
              <text x="5" y="12.5" textAnchor="middle" fontSize="9" fontWeight="700" fill="#fff">X</text>
            </svg>
          }
        />
      </div>
      <span className="ml-[246px] flex h-[19px] w-[17px] items-center justify-center bg-[#3169d3] text-[11px] text-white">RU</span>
      <div className="ml-[20px] flex h-full flex-1 items-center border-l border-[#0f4fb0] bg-gradient-to-b from-[#17a3ea] to-[#0f8fdd] text-[11px] text-white">
        <span className="-ml-[9px] flex h-[19px] w-[19px] items-center justify-center rounded-full border border-white bg-[#2a6fd0]">
          <svg width="8" height="10" viewBox="0 0 8 10"><path d="M6 1L2 5l4 4" stroke="#fff" strokeWidth="2" fill="none" /></svg>
        </span>
        <svg width="32" height="20" viewBox="0 0 32 20" className="ml-[2px]">
          <rect x="1" y="2" width="12" height="11" fill="#3b4d6e" />
          <circle cx="11" cy="14" r="5" fill="#fff" stroke="#333" />
          <path d="M11 11v3h3" stroke="#333" fill="none" />
          <rect x="20" y="1" width="10" height="9" fill="#2a3f8f" stroke="#16255a" />
          <rect x="16" y="7" width="10" height="9" fill="#3a5fc0" stroke="#16255a" />
        </svg>
        <span className="ml-[6px]">13:37</span>
      </div>
    </div>
  );
}

export default function App() {
  return (
    <div className="relative flex h-[1024px] w-[1280px] flex-col overflow-hidden bg-white font-['Noto_Sans',sans-serif]">
      <TitleBar />
      <TabsRow />
      <Ribbon />
      <FormulaBar />
      <Sheet />
      <SheetTabs />
      <StatusBar />
      <Taskbar />
      <div className="absolute top-0 left-0"><OfficeButton /></div>
    </div>
  );
}
